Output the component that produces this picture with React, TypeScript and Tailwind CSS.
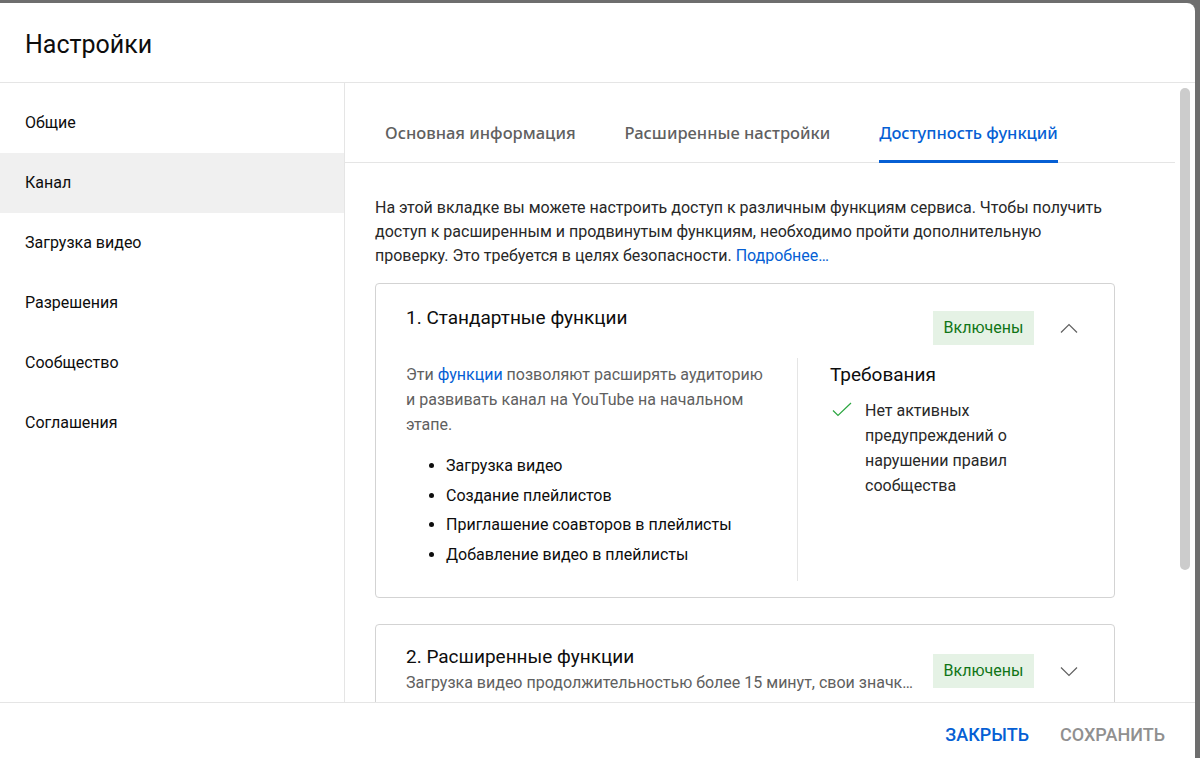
import React from 'react';

const sideItems = ['Общие', 'Канал', 'Загрузка видео', 'Разрешения', 'Сообщество', 'Соглашения'];
const tabs = ['Основная информация', 'Расширенные настройки', 'Доступность функций'];
const features = [
  'Загрузка видео',
  'Создание плейлистов',
  'Приглашение соавторов в плейлисты',
  'Добавление видео в плейлисты',
];

const Chevron: React.FC<{ up?: boolean }> = ({ up }) => (
  <svg width="24" height="24" viewBox="0 0 24 24" fill="none" className="shrink-0">
    <path
      d={up ? 'M4 16.5L12 8.5L20 16.5' : 'M4 8.5L12 16.5L20 8.5'}
      stroke="#606060"
      strokeWidth="1.2"
    />
  </svg>
);

const Badge: React.FC = () => (
  <div className="h-[34px] w-[101px] shrink-0 flex items-center justify-center bg-[#e5f2e5] text-[16px] text-[#107516]">
    Включены
  </div>
);

const App: React.FC = () => {
  return (
    <div
      className="w-[1200px] h-[758px] overflow-hidden bg-[#6e6e6e] pt-[3px]"
      style={{ fontFamily: 'Roboto, "Noto Sans", sans-serif' }}
    >
      <div className="w-[1195px] h-[764px] bg-white rounded-tr-[8px] flex flex-col">
        {/* header */}
        <div className="h-[80px] shrink-0 border-b border-[#e5e5e5] flex items-center pl-[25px] pt-[5px]">
          <h1 className="text-[25px] text-[#0d0d0d]">Настройки</h1>
        </div>

        <div className="h-[619px] shrink-0 flex">
          {/* sidebar */}
          <div className="w-[345px] shrink-0 border-r border-[#e5e5e5] pt-[10px]">
            {sideItems.map((item) => (
              <div
                key={item}
                className={`h-[60px] flex items-center pl-[25px] text-[16px] text-[#0d0d0d] ${
                  item === 'Канал' ? 'bg-[#f0f0f0]' : ''
                }`}
              >
                {item}
              </div>
            ))}
          </div>

          {/* main */}
          <div className="flex-1 flex overflow-hidden">
            <div className="w-[830px] shrink-0 overflow-hidden">
              <div
                className="h-[80px] border-b border-[#e5e5e5] flex items-end pl-10 gap-[49px]"
                style={{ fontFamily: '"Noto Sans", sans-serif' }}
              >
                {tabs.map((t, i) => (
                  <div
                    key={t}
                    className={`-mb-px pb-[17px] border-b-[3px] leading-5 text-[16.5px] font-medium ${
                      i === 2 ? 'border-[#065fd4] text-[#065fd4]' : 'border-transparent text-[#606060]'
                    }`}
                  >
                    {t}
                  </div>
                ))}
              </div>

              <div className="pl-[30px] pt-[33px] w-[770px]">
                <p className="text-[16px] leading-6 text-[#282828]">
                  На этой вкладке вы можете настроить доступ к различным функциям сервиса. Чтобы получить
                  доступ к расширенным и продвинутым функциям, необходимо пройти дополнительную
                  проверку. Это требуется в целях безопасности.{' '}
                  <span className="text-[#065fd4]">Подробнее…</span>
                </p>

                {/* card 1 */}
                <div className="mt-[15px] border border-[#d3d3d3] rounded-[4px] pl-[30px] pr-[33px] pt-5 pb-4">
                  <div className="flex items-center">
                    <div className="flex-1 pt-[2px]">
                      <div className="text-[19px] leading-6 text-[#0d0d0d]">1. Стандартные функции</div>
                      <div className="h-[22px]" />
                    </div>
                    <Badge />
                    <div className="ml-[23px]">
                      <Chevron up />
                    </div>
                  </div>
                  <div className="flex mt-[6px]">
                    <div className="w-[392px] shrink-0 border-r border-[#e5e5e5] pt-[4px] pb-[11px]">
                      <p className="w-[362px] text-[16px] leading-[25px] text-[#606060]">
                        Эти <span className="text-[#065fd4]">функции</span> позволяют расширять аудиторию и
                        развивать канал на YouTube на начальном этапе.
                      </p>
                      <ul className="list-disc pl-10 mt-[14px] text-[16px] text-[#0d0d0d]">
                        {features.map((f) => (
                          <li key={f} className="leading-6 py-[2.85px]">
                            {f}
                          </li>
                        ))}
                      </ul>
                    </div>
                    <div className="flex-1 pl-[32px] pt-[5px]">
                      <div className="text-[19px] leading-6 text-[#0d0d0d]">Требования</div>
                      <div className="flex mt-[11px]">
                        <svg width="24" height="25" viewBox="0 0 24 25" fill="none" className="shrink-0">
                          <path d="M3 12.5L8 17.5L21 5" stroke="#2ba640" strokeWidth="1.2" />
                        </svg>
                        <p className="ml-[11px] w-[190px] text-[16px] leading-[25px] text-[#282828]">
                          Нет активных предупреждений о нарушении правил сообщества
                        </p>
                      </div>
                    </div>
                  </div>
                </div>

                {/* card 2 */}
                <div className="mt-[26px] border border-[#d3d3d3] rounded-[4px] pl-[30px] pr-[33px] pt-5 pb-4">
                  <div className="flex items-center">
                    <div className="flex-1 min-w-0 pr-3">
                      <div className="text-[19px] leading-6 text-[#0d0d0d]">2. Расширенные функции</div>
                      <div className="text-[16px] leading-7 text-[#606060] truncate">
                        Загрузка видео продолжительностью более 15 минут, свои значки для видео и прямые
                        трансляции
                      </div>
                    </div>
                    <Badge />
                    <div className="ml-[23px]">
                      <Chevron />
                    </div>
                  </div>
                </div>
              </div>
            </div>

            {/* scrollbar */}
            <div className="w-[20px] shrink-0 pl-[5px] pt-[5px]">
              <div className="w-[10px] h-[482px] rounded-full bg-[#cccccc]" />
            </div>
          </div>
        </div>

        {/* footer */}
        <div className="h-16 shrink-0 border-t border-[#e5e5e5] flex items-center justify-end pr-[30px] gap-[31px]">
          <button className="text-[18px] font-medium text-[#065fd4]">ЗАКРЫТЬ</button>
          <button className="text-[18px] font-medium text-[#909090]">СОХРАНИТЬ</button>
        </div>
      </div>
    </div>
  );
};

export default App;
